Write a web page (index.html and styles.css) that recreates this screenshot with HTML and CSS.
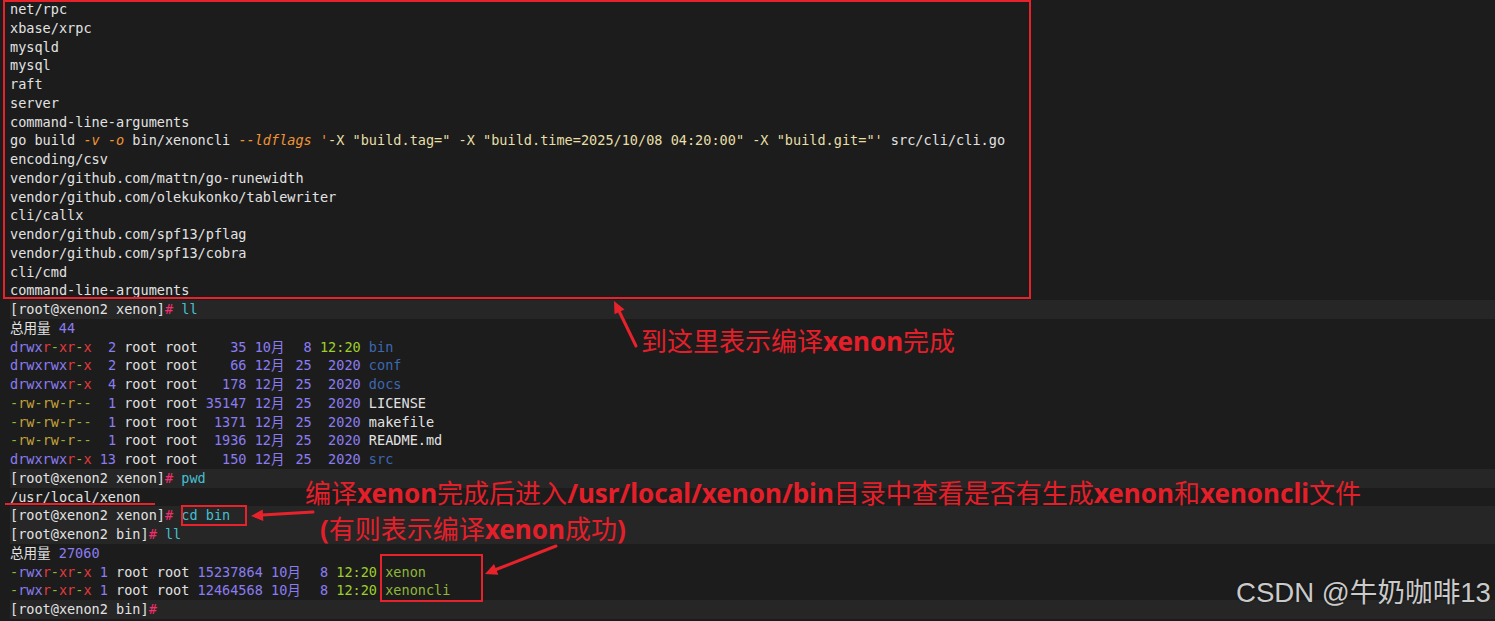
FILE: index.html
```html
<!DOCTYPE HTML>
<html>

<head>
  <meta charset="UTF-8">
  <title>xenon build</title>

  <link rel="stylesheet" href="styles.css">

</head>

<body>
  <div class="term">
    <div class="ln">net/rpc</div>
    <div class="ln">xbase/xrpc</div>
    <div class="ln">mysqld</div>
    <div class="ln">mysql</div>
    <div class="ln">raft</div>
    <div class="ln">server</div>
    <div class="ln">command-line-arguments</div>
    <div class="ln">go build <span class="o">-v</span> <span class="o">-o</span> bin/xenoncli <span class="o">--ldflags</span> <span class="q">'</span><span class="s">-X "build.tag=" -X "build.time=2025/10/08 04:20:00" -X "build.git="'</span> src/cli/cli.go</div>
    <div class="ln">encoding/csv</div>
    <div class="ln">vendor/github.com/mattn/go-runewidth</div>
    <div class="ln">vendor/github.com/olekukonko/tablewriter</div>
    <div class="ln">cli/callx</div>
    <div class="ln">vendor/github.com/spf13/pflag</div>
    <div class="ln">vendor/github.com/spf13/cobra</div>
    <div class="ln">cli/cmd</div>
    <div class="ln">command-line-arguments</div>

    <div class="ln pr">[root@xenon2 xenon]<span class="h">#</span> <span class="c">ll</span></div>
    <div class="ln">总用量 <span class="n">44</span></div>
    <div class="ln"><span class="pu">drwx</span><span class="pg">r</span><span class="pd">-</span><span class="pg">xr</span><span class="pd">-</span><span class="pg">x</span>  <span class="n">2</span> root root    <span class="n">35</span> <span class="n">10<span class="w">月</span></span>  <span class="n">8</span> <span class="g">12:20</span> <span class="b">bin</span></div>
    <div class="ln"><span class="pu">drwxrwx</span><span class="pg">r</span><span class="pd">-</span><span class="pg">x</span>  <span class="n">2</span> root root    <span class="n">66</span> <span class="n">12<span class="w">月</span></span> <span class="n">25</span>  <span class="n">2020</span> <span class="b">conf</span></div>
    <div class="ln"><span class="pu">drwxrwx</span><span class="pg">r</span><span class="pd">-</span><span class="pg">x</span>  <span class="n">4</span> root root   <span class="n">178</span> <span class="n">12<span class="w">月</span></span> <span class="n">25</span>  <span class="n">2020</span> <span class="b">docs</span></div>
    <div class="ln"><span class="pd">-</span><span class="py">rw</span><span class="pd">-</span><span class="py">rw</span><span class="pd">-</span><span class="py">r</span><span class="pd">--</span>  <span class="n">1</span> root root <span class="n">35147</span> <span class="n">12<span class="w">月</span></span> <span class="n">25</span>  <span class="n">2020</span> LICENSE</div>
    <div class="ln"><span class="pd">-</span><span class="py">rw</span><span class="pd">-</span><span class="py">rw</span><span class="pd">-</span><span class="py">r</span><span class="pd">--</span>  <span class="n">1</span> root root  <span class="n">1371</span> <span class="n">12<span class="w">月</span></span> <span class="n">25</span>  <span class="n">2020</span> makefile</div>
    <div class="ln"><span class="pd">-</span><span class="py">rw</span><span class="pd">-</span><span class="py">rw</span><span class="pd">-</span><span class="py">r</span><span class="pd">--</span>  <span class="n">1</span> root root  <span class="n">1936</span> <span class="n">12<span class="w">月</span></span> <span class="n">25</span>  <span class="n">2020</span> README.md</div>
    <div class="ln"><span class="pu">drwxrwx</span><span class="pg">r</span><span class="pd">-</span><span class="pg">x</span> <span class="n">13</span> root root   <span class="n">150</span> <span class="n">12<span class="w">月</span></span> <span class="n">25</span>  <span class="n">2020</span> <span class="b">src</span></div>
    <div class="ln pr">[root@xenon2 xenon]<span class="h">#</span> <span class="c">pwd</span></div>
    <div class="ln">/usr/local/xenon</div>
    <div class="ln pr">[root@xenon2 xenon]<span class="h">#</span> <span class="c">cd bin</span></div>
    <div class="ln pr">[root@xenon2 bin]<span class="h">#</span> <span class="c">ll</span></div>
    <div class="ln">总用量 <span class="n">27060</span></div>
    <div class="ln"><span class="pd">-</span><span class="pu">rwx</span><span class="pg">r</span><span class="pd">-</span><span class="pg">xr</span><span class="pd">-</span><span class="pg">x</span> <span class="n">1</span> root root <span class="n">15237864</span> <span class="n">10<span class="w">月</span></span>  <span class="n">8</span> <span class="g">12:20</span> <span class="x">xenon</span></div>
    <div class="ln"><span class="pd">-</span><span class="pu">rwx</span><span class="pg">r</span><span class="pd">-</span><span class="pg">xr</span><span class="pd">-</span><span class="pg">x</span> <span class="n">1</span> root root <span class="n">12464568</span> <span class="n">10<span class="w">月</span></span>  <span class="n">8</span> <span class="g">12:20</span> <span class="x">xenoncli</span></div>
    <div class="ln pr">[root@xenon2 bin]<span class="h">#</span></div>
  </div>

  <!-- red marks drawn over the screenshot -->
  <div class="box box-build"></div>
  <div class="box box-cd"></div>
  <div class="box box-files"></div>
  <div class="uline"></div>

  <svg class="arrows" width="1495" height="621" viewBox="0 0 1495 621">
    <g stroke="#e8222b" stroke-width="3" stroke-linecap="round">
      <line x1="636" y1="346" x2="619" y2="311"/>
      <line x1="313" y1="512" x2="262" y2="515"/>
      <line x1="556" y1="546" x2="496" y2="569.5"/>
    </g>
    <g fill="#e8222b">
      <polygon points="614,301 624.5,309.4 614.5,314.2"/>
      <polygon points="251,516 263.3,521 262.7,509.6"/>
      <polygon points="485,574 498.3,574.8 494,564"/>
    </g>
  </svg>

  <div class="note note-done">到这里表示编译<b>xenon</b>完成</div>
  <div class="note note-bin">编译<b>xenon</b>完成后进入<b>/usr/local/xenon/bin</b>目录中查看是否有生成<b>xenon</b>和<b>xenoncli</b>文件</div>
  <div class="note note-ok"><b>(</b>有则表示编译<b>xenon</b>成功<b>)</b></div>

  <div class="wm">CSDN @牛奶咖啡13</div>
</body>

</html>
```

FILE: styles.css
```css
html, body {
  margin: 0;
  height: 621px;
  overflow: hidden;
}

body {
  position: relative;
  background-color: #1c1c1c;
}

.term {
  padding-left: 10px;
  font-family: "DejaVu Sans Mono", "Noto Sans CJK SC", monospace;
  font-size: 13.55px;
  color: #e2e2e2;
}

.ln {
  height: 18.75px;
  line-height: 18.75px;
  white-space: pre;
}

.ln.pr {
  background-color: #262626;
}

/* wide chars take two cells */
.w {
  display: inline-block;
  width: 2ch;
}

.n { color: #8b7cf2; }
.g { color: #9ccf2a; }
.b { color: #3d68b2; }
.x { color: #8fb83a; }
.h { color: #f0306e; }
.c { color: #45bfd2; }
.o { color: #f09434; font-style: italic; }
.q { color: #f09434; }
.s { color: #e6dfa6; }

.pu { color: #8b7cf2; }
.pg { color: #e2393e; }
.pd { color: #8fb83a; }
.py { color: #c4a33a; }

.box {
  position: absolute;
  border: 2px solid #e8222b;
  box-sizing: border-box;
}

.box-build {
  left: 3px;
  top: 0;
  width: 1028px;
  height: 299px;
}

.box-cd {
  left: 181px;
  top: 505px;
  width: 66px;
  height: 21px;
}

.box-files {
  left: 380px;
  top: 554px;
  width: 103px;
  height: 48px;
}

.uline {
  position: absolute;
  left: 5px;
  top: 503px;
  width: 150px;
  height: 2px;
  background-color: #e8222b;
}

.arrows {
  position: absolute;
  left: 0;
  top: 0;
  pointer-events: none;
}

.note {
  position: absolute;
  font-family: "Noto Sans", "Noto Sans CJK SC", sans-serif;
  font-size: 26px;
  line-height: 26px;
  color: #e51f2a;
  white-space: nowrap;
}

.note b {
  font-weight: bold;
}

.note-done {
  left: 641px;
  top: 328px;
}

.note-bin {
  left: 305px;
  top: 480px;
}

.note-ok {
  left: 320px;
  top: 516px;
}

.wm {
  position: absolute;
  left: 1236px;
  top: 578px;
  font-family: "Liberation Sans", "Noto Sans CJK SC", sans-serif;
  font-size: 27.6px;
  line-height: 30px;
  color: #cacaca;
  text-shadow: 0 0 2px rgba(0, 0, 0, 0.5);
  white-space: nowrap;
}
```
